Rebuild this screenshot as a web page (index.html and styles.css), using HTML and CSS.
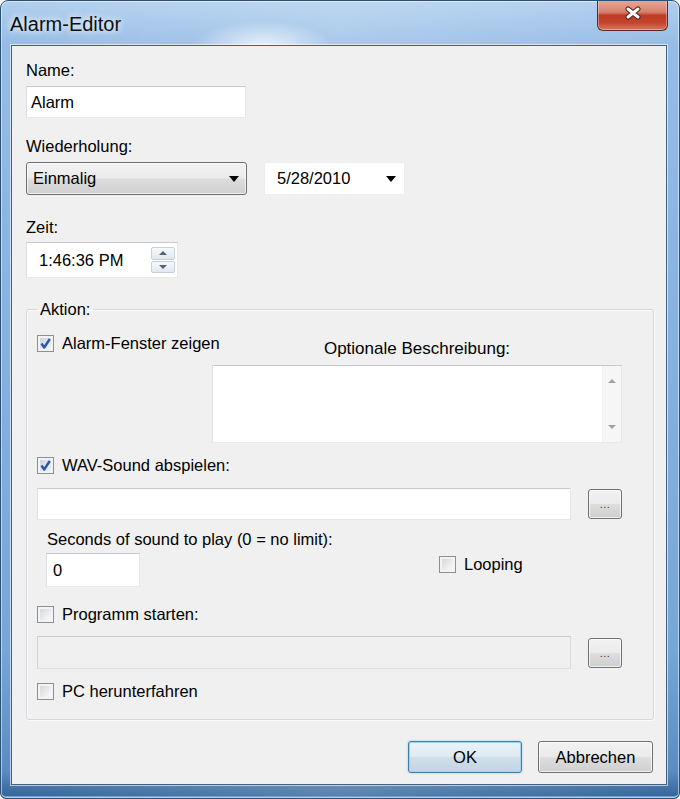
FILE: index.html
```html
<!DOCTYPE html>
<html lang="de">
<head>
<meta charset="utf-8">
<title>Alarm-Editor</title>
<link rel="stylesheet" href="styles.css">
</head>
<body>
<div class="window">
  <div class="titlebar">
    <span class="title">Alarm-Editor</span>
    <div class="close">
      <svg width="18" height="14" viewBox="0 0 18 14">
        <path d="M4 3 L14 11 M14 3 L4 11" stroke="#4a2320" stroke-width="5" stroke-linecap="round" fill="none"/>
        <path d="M4 3 L14 11 M14 3 L4 11" stroke="#ffffff" stroke-width="3" stroke-linecap="round" fill="none"/>
      </svg>
    </div>
  </div>
  <div class="client">
    <div class="label">Name:</div>
    <div class="textbox name-box">Alarm</div>

    <div class="label l-repeat">Wiederholung:</div>
    <div class="repeat-row">
      <div class="combo"><span>Einmalig</span><span class="arrow"></span></div>
      <div class="datepick"><span>5/28/2010</span><span class="arrow"></span></div>
    </div>

    <div class="label l-time">Zeit:</div>
    <div class="textbox time-box">
      <span>1:46:36 PM</span>
      <div class="spin">
        <div class="spin-btn"><span class="tri-up"></span></div>
        <div class="spin-btn"><span class="tri-down"></span></div>
      </div>
    </div>

    <fieldset class="group">
      <legend>Aktion:</legend>

      <div class="alarm-row">
        <div class="cb">
          <span class="box checked"><svg width="13" height="13" viewBox="0 0 13 13"><path d="M2.5 6.5 L5.2 10.5 L10.8 2" stroke="#3254a6" stroke-width="2.4" fill="none" stroke-linejoin="round"/></svg></span>
          <span>Alarm-Fenster zeigen</span>
        </div>
        <div class="desc">
          <div class="desc-label">Optionale Beschreibung:</div>
          <div class="memo">
            <div class="memo-scroll">
              <span class="tri-up small"></span>
              <span class="tri-down small"></span>
            </div>
          </div>
        </div>
      </div>

      <div class="cb row-wav">
        <span class="box checked"><svg width="13" height="13" viewBox="0 0 13 13"><path d="M2.5 6.5 L5.2 10.5 L10.8 2" stroke="#3254a6" stroke-width="2.4" fill="none" stroke-linejoin="round"/></svg></span>
        <span>WAV-Sound abspielen:</span>
      </div>
      <div class="file-row row-wavfile">
        <div class="textbox file-box"></div>
        <div class="dots-btn">...</div>
      </div>

      <div class="label l-seconds">Seconds of sound to play (0 = no limit):</div>
      <div class="seconds-row">
        <div class="textbox secs-box">0</div>
        <div class="cb looping">
          <span class="box"></span>
          <span>Looping</span>
        </div>
      </div>

      <div class="cb row-prog">
        <span class="box"></span>
        <span>Programm starten:</span>
      </div>
      <div class="file-row row-progfile">
        <div class="textbox file-box disabled"></div>
        <div class="dots-btn">...</div>
      </div>

      <div class="cb row-pc">
        <span class="box"></span>
        <span>PC herunterfahren</span>
      </div>
    </fieldset>

    <div class="buttons">
      <div class="btn btn-default">OK</div>
      <div class="btn">Abbrechen</div>
    </div>
  </div>
</div>
</body>
</html>
```
FILE: styles.css
```css
html, body {
  margin: 0;
  padding: 0;
  background: #ffffff;
}

body {
  font-family: "Liberation Sans", Arial, sans-serif;
  font-size: 16.5px;
  color: #000;
}

.window {
  box-sizing: border-box;
  width: 680px;
  height: 799px;
  border: 1px solid #2c4f75;
  border-radius: 8px 8px 6px 6px;
  background:
    radial-gradient(ellipse 70px 26px at 262px 46px, rgba(255,255,255,0.8), rgba(255,255,255,0) 100%),
    linear-gradient(to right, rgba(255,255,255,0) 0, rgba(255,255,255,0.18) 50%, rgba(255,255,255,0) 100%),
    linear-gradient(to bottom, #b1cfee 0, #95bce6 45px, #88b3e0 300px, #76a6d7 650px, #5a8cc2 770px, #2f5f92 799px);
  box-shadow: inset 0 0 0 1px rgba(255,255,255,0.5), inset 0 -3px 0 -1px #6fa0d3;
  overflow: hidden;
}

.titlebar {
  height: 44px;
  display: flex;
  justify-content: space-between;
  align-items: flex-start;
}

.title {
  font-size: 20px;
  line-height: 24px;
  padding: 11px 0 0 9px;
  color: #101010;
  text-shadow: 0 0 6px rgba(255,255,255,0.9), 0 0 10px rgba(255,255,255,0.7);
}

.close {
  box-sizing: border-box;
  width: 71px;
  height: 31px;
  margin-right: 11px;
  margin-top: -1px;
  border: 1px solid #5a2b26;
  border-top: none;
  border-radius: 0 0 6px 6px;
  background: linear-gradient(to bottom, #e5a999 0, #d6816d 40%, #c03a24 52%, #c3432b 75%, #d8765b 100%);
  box-shadow: inset 0 0 0 1px rgba(255,255,255,0.35);
  display: flex;
  align-items: center;
  justify-content: center;
  padding-bottom: 4px;
}

.client {
  box-sizing: border-box;
  height: 740px;
  margin: 0 12px 0 10px;
  border: 1px solid #40607f;
  background: #f0f0f0;
  padding: 15px 12px 0 14px;
  box-shadow: 0 0 0 1px rgba(255,255,255,0.6);
}

.label {
  line-height: 19px;
  white-space: nowrap;
}

.l-repeat { margin-top: 19px; }
.l-time { margin-top: 23px; }

.textbox {
  box-sizing: border-box;
  background: #fff;
  border: 1px solid;
  border-color: #c6cad0 #e3e6ea #e6e8ec #dcdfe4;
  display: flex;
  align-items: center;
  line-height: 19px;
}

.name-box {
  margin-top: 6px;
  width: 220px;
  height: 32px;
  padding-left: 4px;
}

.repeat-row {
  margin-top: 6px;
  display: flex;
  gap: 17px;
  height: 33px;
}

.combo {
  box-sizing: border-box;
  width: 221px;
  height: 33px;
  border: 1px solid #6f6f6f;
  border-radius: 3px;
  background: linear-gradient(to bottom, #f3f3f3 0, #ebebeb 48%, #dddddd 52%, #cfcfcf 100%);
  box-shadow: inset 0 0 0 1px rgba(255,255,255,0.7);
  display: flex;
  align-items: center;
  justify-content: space-between;
  padding: 0 7px 0 6px;
}

.arrow {
  width: 0;
  height: 0;
  border-left: 5px solid transparent;
  border-right: 5px solid transparent;
  border-top: 6px solid #000;
}

.datepick {
  box-sizing: border-box;
  width: 141px;
  height: 33px;
  background: #fff;
  border: 1px solid #eeeeee;
  display: flex;
  align-items: center;
  justify-content: space-between;
  padding: 0 8px 0 12px;
}

.time-box {
  margin-top: 5px;
  width: 152px;
  height: 36px;
  padding: 0 2px 0 12px;
  justify-content: space-between;
}

.spin {
  width: 24px;
  height: 26px;
  display: flex;
  flex-direction: column;
  gap: 1px;
}

.spin-btn {
  flex: 1;
  border: 1px solid #c7d0da;
  border-radius: 2px;
  background: linear-gradient(to bottom, #f7f9fb, #e2e8ef);
  display: flex;
  align-items: center;
  justify-content: center;
}

.tri-up {
  width: 0;
  height: 0;
  border-left: 4px solid transparent;
  border-right: 4px solid transparent;
  border-bottom: 4px solid #4c6480;
}

.tri-down {
  width: 0;
  height: 0;
  border-left: 4px solid transparent;
  border-right: 4px solid transparent;
  border-top: 4px solid #4c6480;
}

.tri-up.small { border-bottom-color: #9aa3ad; }
.tri-down.small { border-top-color: #9aa3ad; }

.group {
  margin: 22px 0 0 0;
  padding: 15px 10px 18px 10px;
  border: 1px solid #d3d9df;
  border-radius: 3px;
  box-shadow: inset 1px 1px 0 #fafafa, 1px 1px 0 #fafafa;
  min-width: 0;
}

.group legend {
  line-height: 19px;
  padding: 0 3px;
  margin-left: 0;
}

.cb {
  display: flex;
  align-items: center;
  gap: 8px;
  line-height: 19px;
  white-space: nowrap;
}

.box {
  box-sizing: border-box;
  width: 17px;
  height: 17px;
  flex: none;
  border: 1px solid #8d8f93;
  background: linear-gradient(135deg, #cfd3d8 0, #eceef0 60%, #fbfbfb 100%);
  box-shadow: inset 0 0 0 2px #f3f3f3;
  display: flex;
  align-items: center;
  justify-content: center;
}

.box.checked {
  background: linear-gradient(135deg, #c6d0dc 0, #e3e9f0 60%, #f6f8fa 100%);
}

.alarm-row {
  display: grid;
  grid-template-columns: 175px 410px;
  align-items: start;
}

.desc {
  padding-top: 5px;
  display: flex;
  flex-direction: column;
}

.desc-label {
  line-height: 19px;
  text-align: center;
  font-size: 17px;
}

.memo {
  box-sizing: border-box;
  margin-top: 7px;
  height: 78px;
  background: #fff;
  border: 1px solid;
  border-color: #c6cad0 #e3e6ea #e6e8ec #dcdfe4;
  display: flex;
  justify-content: flex-end;
}

.memo-scroll {
  width: 18px;
  background: #f6f6f6;
  border-left: 1px solid #f0f0f0;
  display: flex;
  flex-direction: column;
  align-items: center;
  justify-content: space-between;
  padding: 13px 0 13px;
}

.row-wav { margin-top: 13px; }

.file-row {
  display: flex;
  align-items: center;
  gap: 17px;
}

.row-wavfile { margin-top: 13px; }
.row-progfile { margin-top: 12px; }

.file-box {
  width: 534px;
  height: 32px;
}

.row-progfile .file-box { height: 33px; }

.file-box.disabled {
  background: #f0f0f0;
  border-color: #c9cccf #d8dadc #dcdee0 #d2d4d7;
}

.dots-btn {
  box-sizing: border-box;
  width: 34px;
  height: 30px;
  border: 1px solid #707070;
  border-radius: 3px;
  background: linear-gradient(to bottom, #f2f2f2 0, #ebebeb 48%, #dddddd 52%, #cfcfcf 100%);
  box-shadow: inset 0 0 0 1px rgba(255,255,255,0.7);
  font-size: 11px;
  line-height: 11px;
  color: #333;
  display: flex;
  align-items: flex-end;
  justify-content: center;
  padding-bottom: 8px;
  letter-spacing: 0.5px;
}

.l-seconds {
  margin-top: 10px;
  padding-left: 10px;
}

.seconds-row {
  margin-top: 4px;
  display: flex;
  align-items: flex-start;
}

.secs-box {
  margin-left: 9px;
  width: 94px;
  height: 34px;
  padding-left: 6px;
}

.looping {
  margin-left: 299px;
  margin-top: 2px;
}

.row-prog { margin-top: 18px; }
.row-pc { margin-top: 13px; }

.buttons {
  margin-top: 21px;
  margin-right: 1px;
  display: flex;
  justify-content: flex-end;
  gap: 16px;
}

.btn {
  box-sizing: border-box;
  width: 115px;
  height: 32px;
  border: 1px solid #707070;
  border-radius: 3px;
  background: linear-gradient(to bottom, #f2f2f2 0, #ebebeb 48%, #dddddd 52%, #cfcfcf 100%);
  box-shadow: inset 0 0 0 1px rgba(255,255,255,0.75);
  display: flex;
  align-items: center;
  justify-content: center;
  line-height: 19px;
}

.btn-default {
  width: 114px;
  border-color: #3c7fb1;
  background: linear-gradient(to bottom, #eaf3f8 0, #e0ebf2 48%, #cfdfea 52%, #c2d5e2 100%);
  box-shadow: inset 0 0 0 1px #9fd4f1, 0 0 2px rgba(60,127,177,0.5);
}
```
